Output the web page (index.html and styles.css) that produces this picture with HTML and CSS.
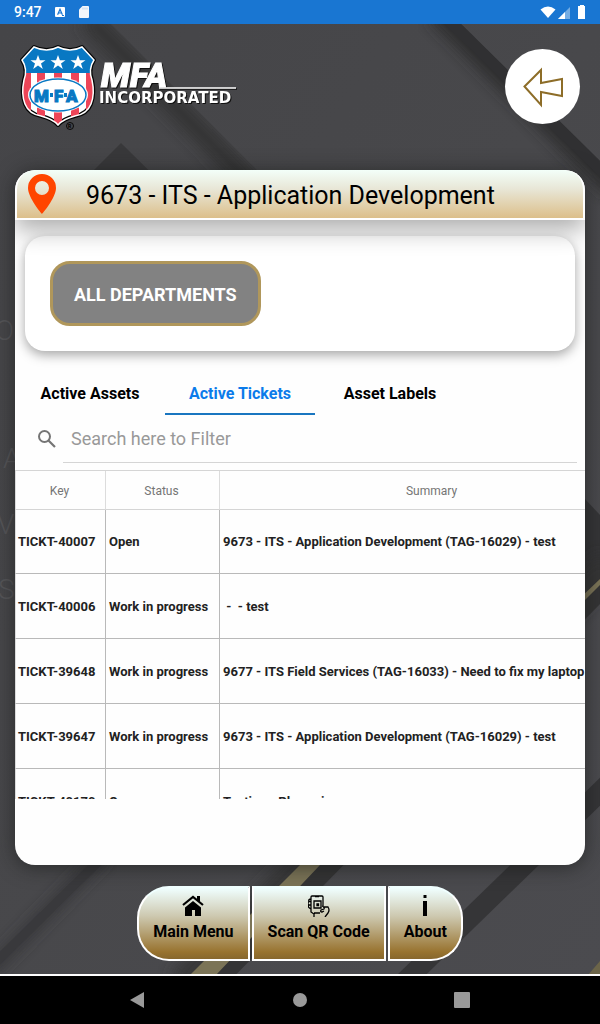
FILE: index.html
```html
<!DOCTYPE html>
<html lang="en">
<head>
<meta charset="utf-8">
<meta name="viewport" content="width=device-width, initial-scale=1">
<title>MFA Incorporated - Active Tickets</title>
<link rel="stylesheet" href="styles.css">
</head>
<body>
<div class="status-bar">
  <time>9:47</time>
  <svg width="12" height="12" viewBox="0 0 12 12" aria-hidden="true"><rect x="1" y="1" width="10" height="10" rx="1" fill="#fff"/><path d="M3.6 8.8 6 3.2l2.4 5.6M4.5 7h3M8 9.5h2" fill="none" stroke="#1976d2" stroke-width="1.2"/></svg>
  <svg width="12" height="14" viewBox="0 0 12 14" aria-hidden="true"><path d="M4.5 1H10a1 1 0 0 1 1 1v10a1 1 0 0 1-1 1H2a1 1 0 0 1-1-1V4.500z" fill="#f4f7fb"/><path d="M5 2.500v2M7 2.500v2M9 2.500v2" stroke="#b9d3ee" stroke-width="1"/></svg>
  <svg class="signals" width="46" height="16" viewBox="0 0 46 16" aria-hidden="true"><path d="M.5 5.500Q8 -.5 15.500 5.500L8 14z" fill="#fff"/><path d="M18 15 30 3v12z" fill="#75ade4"/><path d="M18 15l7-7v7z" fill="#fff"/><path d="M38 2h2V1h4v1h1v13h-7z" fill="#fff"/></svg>
</div>

<div class="app">
  <svg class="backdrop" viewBox="0 0 600 952" preserveAspectRatio="xMidYMid slice" aria-hidden="true">
    <defs>
      <linearGradient id="base" x1="0" y1="0" x2="1" y2="1"><stop offset="0" stop-color="#454548"/><stop offset=".5" stop-color="#48484b"/><stop offset="1" stop-color="#4b4b4f"/></linearGradient>
      <filter id="soft"><feGaussianBlur stdDeviation="7"/></filter>
      <clipPath id="under1"><path d="M0 0H110L290 180V300H0z"/></clipPath>
      <clipPath id="under2"><path d="M200 0H460L600 138V300H200z"/></clipPath>
    </defs>
    <rect width="600" height="952" fill="url(#base)"/>
    <g clip-path="url(#under1)"><path d="M88-5 280 190" stroke="#303030" stroke-width="23" filter="url(#soft)" opacity=".8"/></g>
    <path d="M50 191 121 120l72 71z" fill="#38383a"/>
    <g clip-path="url(#under2)"><path d="M436-12 616 165" stroke="#29292b" stroke-width="24" filter="url(#soft)" opacity=".8"/><path d="M443-10 623 168" stroke="#303032" stroke-width="13"/></g>
    <path d="M585 476l15 16v84l-15 15z" fill="#353537"/>
    <path d="M610 759 398 965" stroke="#353537" stroke-width="20"/>
    <path d="M105 830-10 948" stroke="#353537" stroke-width="12" filter="url(#soft)"/><path d="M105 832-5 940" stroke="#39393c" stroke-width="9"/>
    <path d="M610 540 180 962" stroke="#343435" stroke-width="30" filter="url(#soft)" opacity=".8"/>
    <path d="M610 558 220 955" stroke="#343435" stroke-width="18"/>
    <path d="M600 556 300 842 190 952H216L320 842 600 562z" fill="#7b7457"/>
    <path d="M588 952 600 938v14z" fill="#6c6549"/>
    <g class="watermark"><text x="-5" y="317">O</text><text x="3" y="445">A</text><text x="-3" y="511">V</text><text x="-2" y="576">S</text></g>
  </svg>

  <header class="app-header">
    <svg class="logo" width="220" height="90" viewBox="0 0 220 90" role="img" aria-label="MFA Incorporated">
      <defs><clipPath id="shield"><path d="M14 5Q27 11 38 5Q50 11 62 5L74 18Q68 27 72 38Q75 52 71 62Q67 72 55 74Q43 77 38 83Q33 77 21 74Q9 72 5 62Q1 52 4 38Q8 27 2 18z"/></clipPath></defs>
      <path d="M14 5Q27 11 38 5Q50 11 62 5L74 18Q68 27 72 38Q75 52 71 62Q67 72 55 74Q43 77 38 83Q33 77 21 74Q9 72 5 62Q1 52 4 38Q8 27 2 18z" fill="#fff" stroke="#050505" stroke-width="4" stroke-linejoin="round"/>
      <g clip-path="url(#shield)"><path d="M0 0h76v31H0z" fill="#0878c3"/><path d="M7 31v54M21 31v54M38 31v54M55 31v54M70 31v54" stroke="#ed4558" stroke-width="8"/></g>
      <path d="M14 5Q27 11 38 5Q50 11 62 5L74 18Q68 27 72 38Q75 52 71 62Q67 72 55 74Q43 77 38 83Q33 77 21 74Q9 72 5 62Q1 52 4 38Q8 27 2 18z" fill="none" stroke="#fff" stroke-width="1.500"/>
      <g fill="#fff"><path id="star" d="m18 13 1.900 5.300H25.500l-4.500 3.300 1.800 5.500-4.800-3.500-4.800 3.500 1.800-5.500-4.500-3.300h5.600z"/><use href="#star" x="20"/><use href="#star" x="40"/></g>
      <ellipse cx="38" cy="53" rx="30" ry="17.500" fill="#fff"/><ellipse cx="38" cy="53" rx="28" ry="16" fill="#fff" stroke="#0878c3" stroke-width="1.500"/>
      <g class="shield-text"><text x="14" y="60">M</text><text x="34" y="60">F</text><text x="46" y="60">A</text></g>
      <path d="M30 51h3v4h-3zm14 0h3v4h-3z" fill="#0878c3"/>
      <circle cx="50" cy="84" r="3.500" fill="none" stroke="#080808"/><text class="registered" x="48" y="86">R</text>
      <g class="wordmark"><text class="wordmark-name" x="81" y="45">MFA</text><path d="M139 46H216" stroke="#fff" stroke-width="1.500"/><text class="wordmark-sub" x="79" y="61">INCORPORATED</text></g>
    </svg>
    <button class="back" type="button" aria-label="Back"><svg width="44" height="44" viewBox="0 0 44 44"><path d="M3.500 21.500 20 5v13l21-4v17l-21-4v13z" fill="none" stroke="#8d6d28" stroke-width="2"/></svg></button>
  </header>

  <main class="card">
    <div class="title-bar">
      <svg width="28" height="40" viewBox="0 0 28 40" aria-hidden="true"><path fill-rule="evenodd" d="M14 0a14 14 0 0 1 14 14C28 24 14 40 14 40S0 24 0 14A14 14 0 0 1 14 0zm0 7a7 7 0 1 0 0 14 7 7 0 0 0 0-14z" fill="#ff4500"/></svg>
      <h1>9673 - ITS - Application Development</h1>
    </div>
    <section class="departments"><button class="department" type="button">ALL DEPARTMENTS</button></section>
    <div class="tabs" role="tablist">
      <button class="tab" type="button" role="tab" aria-selected="false">Active Assets</button>
      <button class="tab" type="button" role="tab" aria-selected="true">Active Tickets</button>
      <button class="tab" type="button" role="tab" aria-selected="false">Asset Labels</button>
    </div>
    <div class="search">
      <label for="filter"><svg width="18" height="18" viewBox="0 0 18 18" role="img" aria-label="Search"><circle cx="6.500" cy="6.500" r="5.500" fill="none" stroke="#757575" stroke-width="2"/><path d="m10.500 10.500 6.500 6.500" stroke="#757575" stroke-width="2.200"/></svg></label>
      <input id="filter" type="search" placeholder="Search here to Filter">
    </div>
    <div class="table-view">
      <table>
        <colgroup><col class="col-key"><col class="col-status"><col class="col-summary"></colgroup>
        <thead><tr><th scope="col">Key</th><th scope="col">Status</th><th scope="col">Summary</th></tr></thead>
        <tbody>
          <tr><td>TICKT-40007</td><td>Open</td><td>9673 - ITS - Application Development (TAG-16029) - test</td></tr>
          <tr><td>TICKT-40006</td><td>Work in progress</td><td> -  - test</td></tr>
          <tr><td>TICKT-39648</td><td>Work in progress</td><td>9677 - ITS Field Services (TAG-16033) - Need to fix my laptop</td></tr>
          <tr><td>TICKT-39647</td><td>Work in progress</td><td>9673 - ITS - Application Development (TAG-16029) - test</td></tr>
          <tr><td>TICKT-40170</td><td>Open</td><td>Testing - Please ignore</td></tr>
        </tbody>
      </table>
    </div>
  </main>

  <nav class="menu" aria-label="Main">
    <button type="button"><svg width="22" height="22" viewBox="0 0 22 22" aria-hidden="true"><path d="M1 10 11 2l10 8" fill="none" stroke="#000" stroke-width="2.200"/><path d="M15 1h3v6l-3-2zM11 6l8 6.500V21h-6v-6h-3v6H3v-8.500z"/></svg>Main Menu</button>
    <button type="button"><svg width="22" height="22" viewBox="0 0 22 22" aria-hidden="true" fill="none" stroke="#000" stroke-width="1.300"><path d="M15 11V2a1 1 0 0 0-1-1H4a1 1 0 0 0-1 1v15l3 2v3M7 1.500h4M6 18h6M3 4Q0 4 1 6.500Q-1 8 1 10Q-1 12 3 14M1 6.500h2M1 10h2"/><path d="M6 6h7v7H6z"/><path d="M9 9h1.500v1.500H9z" fill="#000"/><path d="M14 11q3 1 2 3l-3 1q-1 2 1 2l2-1m-1-4 5 0q2 3 0 6l-3 4"/></svg>Scan QR Code</button>
    <button type="button"><svg width="22" height="22" viewBox="0 0 22 22" aria-hidden="true"><path d="M9.500 0h3v3h-3zM9 6h4v15H9z"/></svg>About</button>
  </nav>
</div>

<div class="system-nav">
  <button type="button" aria-label="System back"><svg width="16" height="16" viewBox="0 0 16 16"><path d="M14 0v16L0 8z" fill="#999"/></svg></button>
  <button type="button" aria-label="Home"><svg width="16" height="16" viewBox="0 0 16 16"><circle cx="8" cy="8" r="7" fill="#999"/></svg></button>
  <button type="button" aria-label="Recent apps"><svg width="16" height="16" viewBox="0 0 16 16"><rect width="16" height="16" rx="1" fill="#999"/></svg></button>
</div>
</body>
</html>
```

FILE: styles.css
```css
* { box-sizing: border-box; }
body { margin: 0; min-height: 100vh; display: flex; flex-direction: column; font-family: Roboto, "Liberation Sans", sans-serif; background: #49494c; color: #000; }
button { font: inherit; color: inherit; border: 0; background: none; padding: 0; }
svg { display: block; }

.status-bar { height: 24px; flex: none; display: flex; align-items: center; gap: 12px; padding: 0 14px; background: #1976d2; color: #fff; font-size: 14px; font-weight: 500; }
.signals { margin-left: auto; }

.app { position: relative; isolation: isolate; flex: 1; display: flex; flex-direction: column; border-bottom: 2px solid #fff; overflow: hidden; }
.backdrop { position: absolute; inset: 0; width: 100%; height: 100%; z-index: -1; }
.watermark { fill: #555558; font: 300 28px Roboto, sans-serif; }

.app-header { flex: none; height: 146px; display: flex; justify-content: space-between; align-items: flex-start; padding: 18px 20px; }
.shield-text { fill: #0878c3; stroke: #0878c3; stroke-width: 1px; font: 900 17px Roboto, sans-serif; }
.registered { font: 700 5px Roboto, sans-serif; }
.wordmark { fill: #fff; filter: drop-shadow(1px 1px 0 #111); }
.wordmark-name { font: italic 900 34px Roboto, sans-serif; stroke: #fff; stroke-width: 1px; }
.wordmark-sub { font: 700 15px "DejaVu Sans", sans-serif; }
.back { width: 75px; height: 75px; margin-top: 7px; border-radius: 50%; background: #fff; display: grid; place-items: center; }

.card { flex: 1; margin: 0 15px; background: #fefefe; border-radius: 20px; overflow: hidden; display: flex; flex-direction: column; box-shadow: 0 2px 20px rgba(20, 22, 20, .6); }
.title-bar { position: relative; z-index: 1; flex: none; height: 50px; display: flex; align-items: center; gap: 30px; padding: 0 11px; border: 2px solid #fff; border-top: 0; border-radius: 20px 20px 0 0; background: linear-gradient(#f3fff9, #e8e6d6 40%, #dcbf8a); box-shadow: 0 10px 24px rgba(0, 0, 0, .32); }
.title-bar h1 { margin: 0; padding-top: 4px; font-size: 25px; line-height: 30px; font-weight: 400; white-space: nowrap; }
.departments { flex: none; margin: 16px 10px 0; padding: 25px; border-radius: 20px; background: #fff; box-shadow: 0 4px 12px rgba(0, 0, 0, .35); }
.department { display: block; height: 65px; padding: 2px 21px 0; border: 3px solid #b0975b; border-radius: 20px; background: #828282; color: #fff; font-size: 18px; font-weight: 700; }

.tabs { flex: none; display: flex; margin-top: 21px; }
.tab { width: 150px; height: 43px; padding-top: 2px; border-bottom: 2px solid transparent; font-size: 16px; font-weight: 700; }
.tab[aria-selected="true"] { color: #0b7bea; border-color: #1976c0; }
.search { flex: none; display: flex; align-items: center; gap: 7px; padding: 0 8px 0 23px; }
.search input { flex: 1; min-width: 0; height: 48px; padding: 0 8px; border: 0; border-bottom: 1px solid #d5d5d5; background: none; font: 400 18px Roboto, sans-serif; color: #222; outline: 0; }
.search input::placeholder { color: #999; opacity: 1; }
.table-view { flex: none; height: 329px; margin-top: 7px; overflow: hidden; }
table { width: 631px; table-layout: fixed; border-collapse: separate; border-spacing: 0; border-top: 1px solid #d5d5d5; }
.col-key { width: 91px; }
.col-status { width: 114px; }
th { height: 39px; padding: 2px 2px 0 0; border-right: 1px solid #dcdcdc; border-bottom: 1px solid #d5d5d5; font-size: 12px; font-weight: 400; color: #757575; }
td { height: 65px; padding: 0 3px; border-right: 1px solid #b9b9b9; border-bottom: 1px solid #b9b9b9; font-size: 13px; font-weight: 700; color: #222; white-space: pre; }
tbody tr:first-child td { height: 64px; }
th:first-child, td:first-child { border-left: 1px solid #dcdcdc; }
td:first-child { padding: 0 2px; }

.menu { flex: none; display: flex; justify-content: center; gap: 2px; margin: 21px 0 13px; }
.menu button { height: 75px; padding: 7px 14px 0; display: flex; flex-direction: column; align-items: center; justify-content: flex-start; gap: 5px; border: 2px solid #fff; border-top-color: #f0ffff; background: linear-gradient(#f0ffff, #cdc8af 40%, #98732f 90%, #87672d); font-size: 16px; line-height: 20px; font-weight: 700; }
.menu button:first-child { border-radius: 32px 0 0 32px; }
.menu button:last-child { border-radius: 0 32px 32px 0; }

.system-nav { flex: none; height: 48px; display: flex; justify-content: center; align-items: center; gap: 146px; background: #000; }
```
